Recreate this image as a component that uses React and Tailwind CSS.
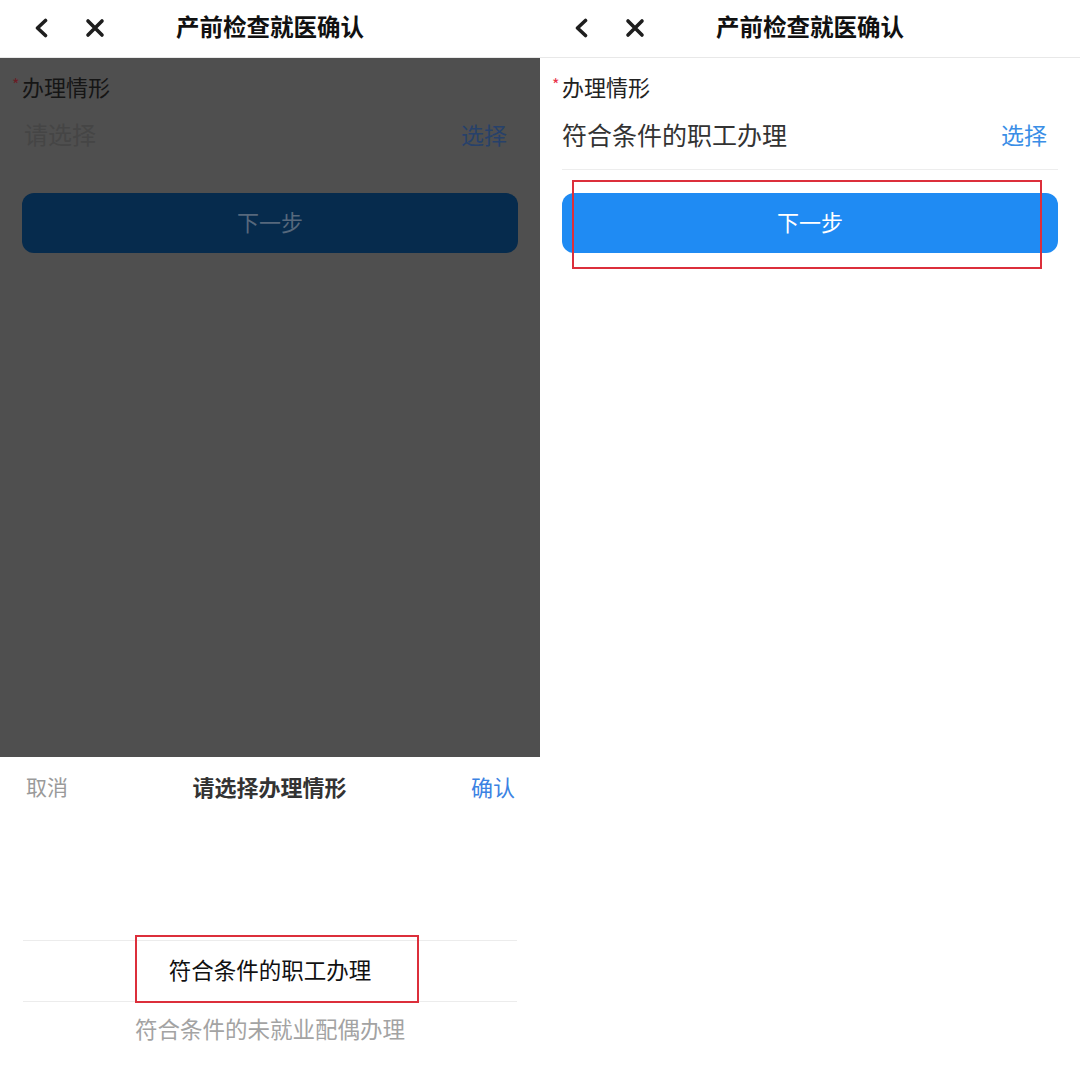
import React from "react";

function Header() {
  return (
    <div className="h-[58px] shrink-0 bg-white flex items-center border-b border-[#e8e8e8]">
      <div className="w-[120px] flex items-center pl-[34px] gap-[37px] pb-[2px]">
        <svg width="14" height="20" viewBox="0 0 14 20">
          <polyline points="11.5,2.5 3.5,10 11.5,17.5" fill="none" stroke="#1e1e1e" strokeWidth="3.6" strokeLinecap="round" strokeLinejoin="round" />
        </svg>
        <svg width="20" height="20" viewBox="0 0 20 20">
          <path d="M3 3L17 17M17 3L3 17" fill="none" stroke="#1e1e1e" strokeWidth="3.6" strokeLinecap="round" />
        </svg>
      </div>
      <div className="flex-1 text-center text-[23.5px] leading-[30px] font-bold text-[#111] pb-[6px]">产前检查就医确认</div>
      <div className="w-[120px]" />
    </div>
  );
}

function Form({ dim }) {
  return (
    <div className="px-[22px]">
      <div className="-ml-[10px] mt-[13px] h-[32px] flex items-start">
        <span className={"w-[10px] text-[16px] leading-none pt-[5px] " + (dim ? "text-[#6b1c25]" : "text-[#e8334a]")}>*</span>
        <span className={"text-[22px] leading-[30px] " + (dim ? "text-[#151515]" : "text-[#222]")}>办理情形</span>
      </div>
      <div className={"h-[67px] border-b flex items-center justify-between pb-[4px] " + (dim ? "border-[#4f4f4f]" : "border-[#ededed]")}>
        {dim ? (
          <span className="text-[24px] leading-[30px] text-[#454545] pl-[2px]">请选择</span>
        ) : (
          <span className="text-[25px] leading-[30px] text-[#333]">符合条件的职工办理</span>
        )}
        <span className={"text-[23px] leading-[30px] pr-[11px] " + (dim ? "text-[#27416a]" : "text-[#3a8ee6]")}>选择</span>
      </div>
      <div className="relative mt-[23px]">
        <div className={"h-[60px] rounded-[12px] flex items-center justify-center text-[22px] leading-[30px] pb-[4px] " + (dim ? "bg-[#062b4d] text-[#56687c]" : "bg-[#1f8bf3] text-white")}>
          下一步
        </div>
        {!dim && <div className="absolute left-[10px] right-[16px] top-[-13px] bottom-[-16px] border-2 border-[#dc2f3b]" />}
      </div>
    </div>
  );
}

export default function App() {
  return (
    <div className="w-[1080px] h-[1080px] flex bg-white font-['Noto_Sans_CJK_SC','Noto_Sans',sans-serif]">
      <div className="w-[540px] h-full flex flex-col">
        <Header />
        <div className="flex-1 bg-[#4f4f4f]">
          <Form dim />
        </div>
        <div className="h-[323px] shrink-0 bg-white flex flex-col">
          <div className="h-[62px] flex items-center justify-between pl-[26px] pr-[25px] pb-[4px]">
            <span className="text-[21px] leading-[30px] text-[#9a9a9a]">取消</span>
            <span className="text-[22px] leading-[30px] font-bold text-[#333]">请选择办理情形</span>
            <span className="text-[22px] leading-[30px] text-[#3b82e3]">确认</span>
          </div>
          <div className="flex-1 pt-[121px]">
            <div className="relative mx-[23px] h-[62px] border-y border-[#ececec] flex items-center justify-center pb-[4px]">
              <span className="text-[22.5px] leading-[30px] text-[#111]">符合条件的职工办理</span>
              <div className="absolute left-[112px] top-[-6px] w-[284px] h-[68px] border-2 border-[#dc2f3b]" />
            </div>
            <div className="h-[56px] flex items-center justify-center pb-[4px]">
              <span className="text-[22.5px] leading-[30px] text-[#a3a3a3]">符合条件的未就业配偶办理</span>
            </div>
          </div>
        </div>
      </div>
      <div className="w-[540px] h-full flex flex-col bg-white">
        <Header />
        <Form />
      </div>
    </div>
  );
}
